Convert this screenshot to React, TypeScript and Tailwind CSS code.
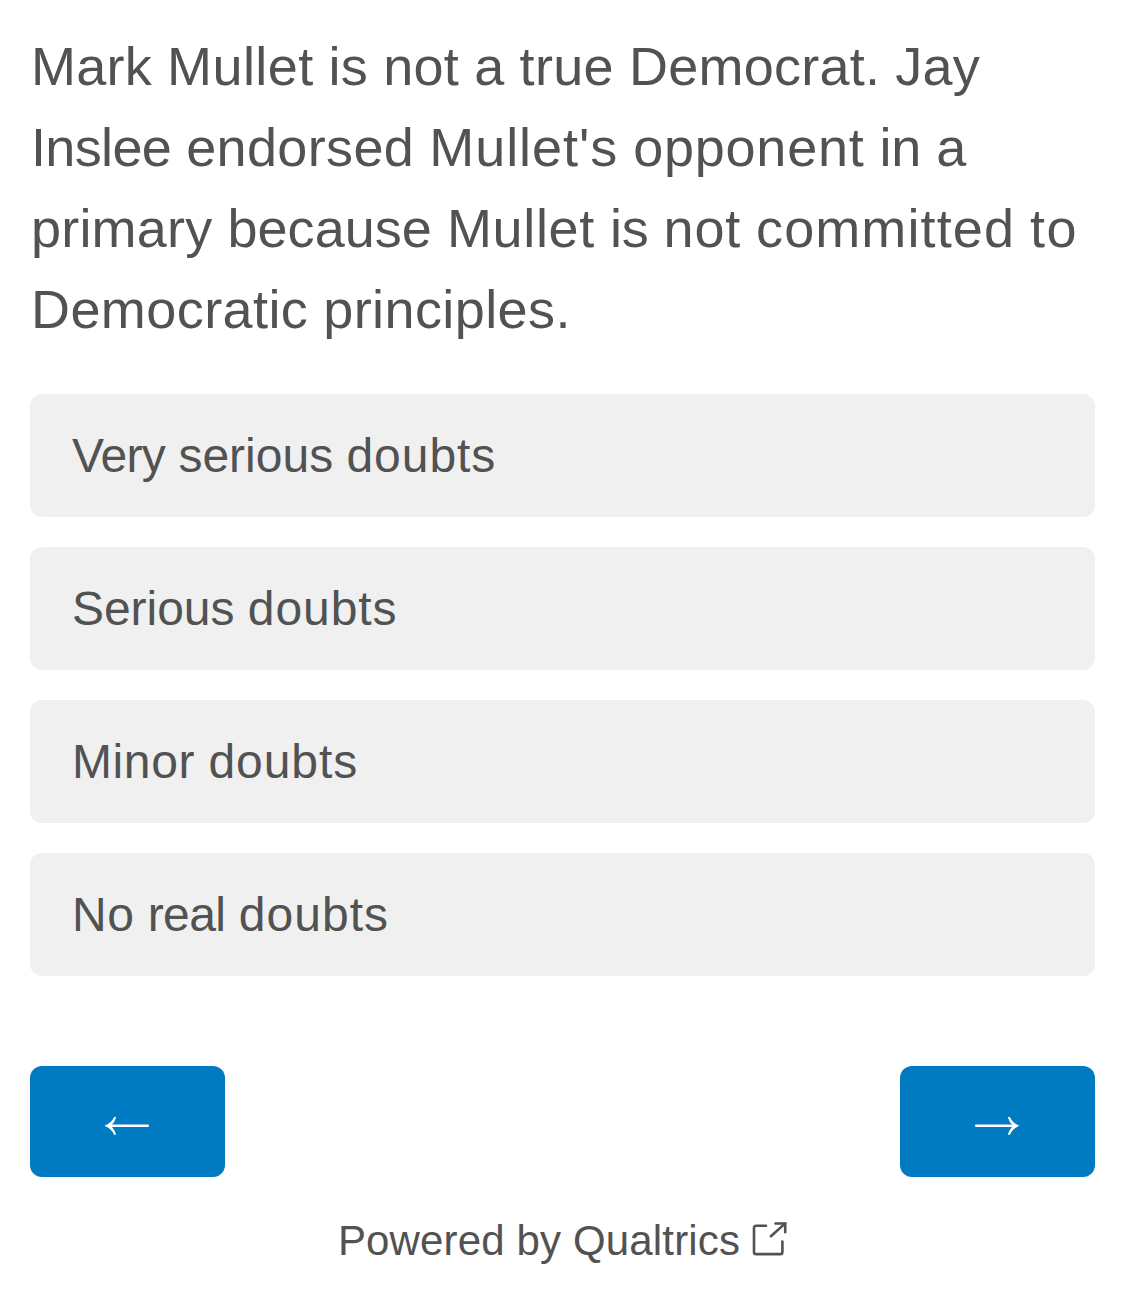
type Word = [text: string, tracking: number];

const QUESTION: Word[][] = [
  [["Mark", 0.27], ["Mullet", 0.4], ["is", 0.3], ["not", 0.3], ["a", 0.3], ["true", 0.35], ["Democrat.", 0.25], ["Jay", 0.2]],
  [["Inslee", -0.65], ["endorsed", 0.35], ["Mullet's", 0.95], ["opponent", 0.76], ["in", -0.2], ["a", 0]],
  [["primary", 0.2], ["because", 0.05], ["Mullet", 0.65], ["is", -0.2], ["not", 0.8], ["committed", 1.1], ["to", 1.5]],
  [["Democratic", 0.42], ["principles.", 0.4]],
];

const OPTIONS: Word[][] = [
  [["Very", -0.75], ["serious", 0], ["doubts", 0.95]],
  [["Serious", -0.05], ["doubts", 0.95]],
  [["Minor", 0.6], ["doubts", 0.95]],
  [["No", 0.5], ["real", -0.6], ["doubts", 1.05]],
];

function Words({ words }: { words: Word[] }) {
  return (
    <span className="block whitespace-nowrap">
      {words.map(([text, tracking], i) => (
        <span key={i}>
          {i > 0 && " "}
          <span style={{ letterSpacing: tracking }}>{text}</span>
        </span>
      ))}
    </span>
  );
}

function Arrow({ flip = false }: { flip?: boolean }) {
  return (
    <svg width="45" height="24" viewBox="0 0 45 24" fill="white" className={flip ? "-scale-x-100" : ""}>
      <path d="M0.2 10.5H38V13.1H0.2Z" />
      <path d="M32.9 3.4Q33.8 2.4 35 3.2Q37.8 9.2 44.6 11.8Q37.8 14.4 35 20.5Q33.8 21.4 32.9 20.3Q34.3 16 37.4 12.6V11Q34.3 8 32.9 3.4Z" />
    </svg>
  );
}

export default function App() {
  return (
    <main className="h-[1312px] w-[1125px] bg-white px-[30px] pt-[26px] font-['Liberation_Sans',Arial,sans-serif] text-[#525252]">
      <h1 className="pl-px text-[54px] leading-[81px]">
        {QUESTION.map((line, i) => (
          <Words key={i} words={line} />
        ))}
      </h1>
      <div className="mt-11 flex flex-col gap-[30px]">
        {OPTIONS.map((option, i) => (
          <button key={i} className="flex h-[123px] items-center rounded-xl bg-[#f0f0f0] pl-[42px] text-left text-[48px]">
            <Words words={option} />
          </button>
        ))}
      </div>
      <div className="mt-[90px] flex justify-between">
        <button aria-label="Previous" className="flex h-[111px] w-[195px] items-center justify-center rounded-xl bg-[#007ac0] pt-2 pr-0.5">
          <Arrow flip />
        </button>
        <button aria-label="Next" className="flex h-[111px] w-[195px] items-center justify-center rounded-xl bg-[#007ac0] pt-2">
          <Arrow />
        </button>
      </div>
      <footer className="mt-[34px] flex justify-center gap-3 text-[42px] leading-[60px]">
        <span className="tracking-[0.15px]">Powered by Qualtrics</span>
        <svg width="35" height="34" viewBox="0 0 35 34" fill="none" stroke="currentColor" strokeWidth="2.6" strokeLinecap="round" strokeLinejoin="round" className="mt-[11px]">
          <path d="M14 3.8H4.2Q2 3.8 2 6V29.9Q2 32.1 4.2 32.1H28.2Q30.4 32.1 30.4 29.9V19.5M18.9 14.2L33 1.6" />
          <path d="M23.5 1.5H33.2V10.2" strokeLinejoin="miter" />
        </svg>
      </footer>
    </main>
  );
}
